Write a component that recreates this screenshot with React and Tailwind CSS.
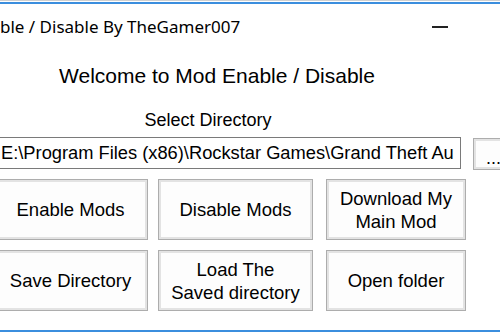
export default function App() {
  const btn =
    "flex items-center justify-center text-center border border-[#adadad] bg-[#fdfdfd] shadow-[inset_0_0_0_2px_#e3e3e3] text-[18.5px] leading-[23px] text-black";

  return (
    <div className="w-[500px] h-[333px] overflow-hidden bg-white flex flex-col font-['Liberation_Sans',Arial,sans-serif]">
      <div className="h-px bg-[#d0d0d0]" />
      <div className="h-px bg-white" />
      <div className="h-[2px] bg-[#3b8ede]" />

      {/* title bar */}
      <div className="h-[46px] flex items-center justify-between pr-[52px]">
        <span className="font-['Noto_Sans',sans-serif] text-[17px] text-black">
          ble / Disable By TheGamer007
        </span>
        <div className="w-[16px] h-[2px] bg-[#222]" />
      </div>

      <div className="flex flex-col items-center">
        <div className="text-[21px] text-black mt-[14px] ml-[-66px] leading-[24px]">
          Welcome to Mod Enable / Disable
        </div>
        <div className="text-[18px] text-black mt-[21px] ml-[-84px] leading-[22px]">
          Select Directory
        </div>

        <div className="flex w-full mt-[6px] items-start">
          <div className="shrink-0 ml-[-4px] w-[465px] h-[32px] border border-[#7a7a7a] flex items-center pl-[4px] text-[18.3px] text-black whitespace-nowrap overflow-hidden">
            E:\Program Files (x86)\Rockstar Games\Grand Theft Au
          </div>
          <div className="shrink-0 ml-[12px] mt-[1px] w-[40px] h-[32px] border border-[#adadad] bg-[#fdfdfd] shadow-[inset_0_0_0_2px_#e3e3e3] flex items-start justify-start pl-[12px] pt-[6px] text-[18px] text-black">
            ...
          </div>
        </div>

        <div className="flex flex-col gap-[10px] w-full mt-[9px]">
          <div className="flex ml-[-7px]">
            <div className={`${btn} w-[155px] h-[61px]`}>Enable Mods</div>
            <div className={`${btn} w-[155px] h-[61px] ml-[10px]`}>Disable Mods</div>
            <div className={`${btn} w-[140px] h-[61px] ml-[13px]`}>
              Download My
              <br />
              Main Mod
            </div>
          </div>
          <div className="flex ml-[-7px]">
            <div className={`${btn} w-[155px] h-[61px]`}>Save Directory</div>
            <div className={`${btn} w-[155px] h-[61px] ml-[10px]`}>
              Load The
              <br />
              Saved directory
            </div>
            <div className={`${btn} w-[140px] h-[61px] ml-[13px]`}>Open folder</div>
          </div>
        </div>
      </div>

      <div className="mt-auto mb-[1px] h-[2px] bg-[#3b8ede]" />
    </div>
  );
}
